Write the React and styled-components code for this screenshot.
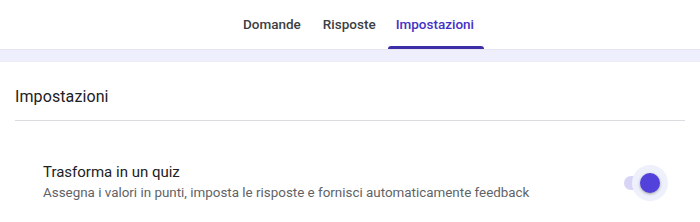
import React, { useState } from "react";
import styled, { createGlobalStyle } from "styled-components";

const Global = createGlobalStyle`
  html, body { margin: 0; padding: 0; background: #ffffff; }
  body { font-family: Roboto, "Noto Sans", Arial, sans-serif; }
`;

const Page = styled.div`
  width: 700px;
  height: 222px;
  overflow: hidden;
  background: #ffffff;
  display: flex;
  flex-direction: column;
`;

const TabBar = styled.nav`
  height: 49px;
  display: flex;
  justify-content: center;
  align-items: stretch;
  padding-left: 17px;
  box-sizing: border-box;
`;

const Tab = styled.button`
  position: relative;
  border: 0;
  background: none;
  padding: 0 10px 0 ${(p) => (p.$active ? 8 : 10)}px;
  margin: 0 1px;
  font-family: Roboto, Arial, sans-serif;
  font-size: 13.5px;
  font-weight: 500;
  color: ${(p) => (p.$active ? "#4531c7" : "#3c4043")};
  display: flex;
  align-items: center;
  padding-bottom: 2px;
  cursor: pointer;

  &::after {
    content: "";
    display: ${(p) => (p.$active ? "block" : "none")};
    position: absolute;
    left: 0;
    right: 0;
    bottom: 0;
    height: 3px;
    border-radius: 3px 3px 0 0;
    background: #3b2ea6;
  }
`;

const Band = styled.div`
  height: 11px;
  background: #efeefc;
  border-top: 1px solid #e6e5ef;
  border-bottom: 1px solid #ececf4;
`;

const Card = styled.section`
  flex: 1;
  padding: 0 15px;
`;

const Heading = styled.h2`
  margin: 0;
  height: 59px;
  display: flex;
  align-items: center;
  padding-top: 10px;
  box-sizing: border-box;
  font-family: Roboto, Arial, sans-serif;
  font-weight: 400;
  font-size: 16px;
  color: #202124;
  border-bottom: 1px solid #dadce0;
  letter-spacing: 0.1px;
`;

const Row = styled.div`
  display: flex;
  align-items: flex-start;
  justify-content: space-between;
  padding: 41px 25px 0 28px;
`;

const RowText = styled.div`
  display: flex;
  flex-direction: column;
`;

const Title = styled.div`
  font-size: 15px;
  color: #202124;
  line-height: 20px;
`;

const Sub = styled.div`
  font-size: 13.4px;
  color: #5f6368;
  line-height: 20px;
  margin-top: 1px;
`;

const Switch = styled.button`
  position: relative;
  flex: none;
  width: 36px;
  height: 14px;
  border: 0;
  padding: 0;
  margin-top: 14px;
  border-radius: 7px;
  background: ${(p) => (p.$on ? "#d8d4f6" : "#c7c7c7")};
  cursor: pointer;
`;

const Halo = styled.span`
  position: absolute;
  top: 50%;
  left: ${(p) => (p.$on ? "26px" : "8px")};
  width: 36px;
  height: 36px;
  margin: -18px 0 0 -18px;
  border-radius: 50%;
  background: #eef1fc;
  display: flex;
  align-items: center;
  justify-content: center;
`;

const Knob = styled.span`
  width: 20px;
  height: 20px;
  border-radius: 50%;
  background: ${(p) => (p.$on ? "#5341dc" : "#fafafa")};
  box-shadow: 0 1px 3px rgba(0, 0, 0, 0.35);
`;

export default function App() {
  const [on, setOn] = useState(true);
  return (
    <Page>
      <Global />
      <TabBar>
        <Tab>Domande</Tab>
        <Tab>Risposte</Tab>
        <Tab $active>Impostazioni</Tab>
      </TabBar>
      <Band />
      <Card>
        <Heading>Impostazioni</Heading>
        <Row>
          <RowText>
            <Title>Trasforma in un quiz</Title>
            <Sub>
              Assegna i valori in punti, imposta le risposte e fornisci automaticamente feedback
            </Sub>
          </RowText>
          <Switch $on={on} onClick={() => setOn(!on)} aria-pressed={on}>
            <Halo $on={on}>
              <Knob $on={on} />
            </Halo>
          </Switch>
        </Row>
      </Card>
    </Page>
  );
}
